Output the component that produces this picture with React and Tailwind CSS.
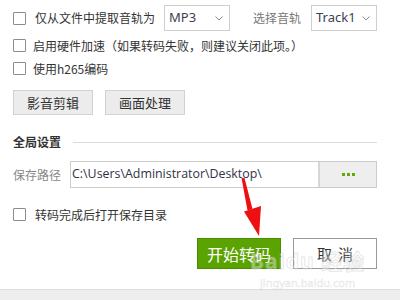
import { useState } from "react";

const FONT = { fontFamily: '"Noto Sans CJK SC", "Noto Sans", sans-serif' };

function Checkbox({ checked, onChange }) {
  return (
    <span
      onClick={onChange}
      className="w-[13px] h-[13px] shrink-0 border border-[#8c8c8c] rounded-[1px] bg-white flex items-center justify-center"
    >
      {checked && <span className="w-[7px] h-[7px] bg-[#5aa300]" />}
    </span>
  );
}

function Chevron() {
  return (
    <svg width="8" height="5" viewBox="0 0 8 5" className="shrink-0">
      <path d="M0.5 0.5 L4 4 L7.5 0.5" fill="none" stroke="#8a8a8a" strokeWidth="1" />
    </svg>
  );
}

function Select({ value }) {
  return (
    <div className="w-[66px] h-[26px] shrink-0 border border-[#cfcfcf] bg-white flex items-center justify-between pl-[4px] pr-[6px]">
      <span className="text-[13px] text-[#3d4150]" style={{ fontFamily: '"Noto Sans", sans-serif' }}>
        {value}
      </span>
      <Chevron />
    </div>
  );
}

export default function App() {
  const [checks, setChecks] = useState([false, false, false, false]);
  const toggle = (i) => setChecks((c) => c.map((v, j) => (j === i ? !v : v)));

  return (
    <div className="relative w-[400px] h-[300px] bg-white overflow-hidden text-[#333]" style={FONT}>
      <div className="flex flex-col pl-[13px] pr-[23px]">
        {/* 音轨 */}
        <div className="flex items-center h-[26px] mt-[5px]">
          <Checkbox checked={checks[0]} onChange={() => toggle(0)} />
          <span className="ml-[9px] w-[129px] shrink-0 text-[12px] leading-none whitespace-nowrap">仅从文件中提取音轨为</span>
          <Select value="MP3" />
          <span className="ml-[23px] w-[58px] shrink-0 text-[12px] leading-none text-[#777] whitespace-nowrap">选择音轨</span>
          <Select value="Track1" />
        </div>

        {/* 硬件加速 */}
        <div className="flex items-center h-[13px] mt-[8px]">
          <Checkbox checked={checks[1]} onChange={() => toggle(1)} />
          <span className="ml-[7px] text-[12px] leading-none whitespace-nowrap">
            启用硬件加速（如果转码失败，则建议关闭此项。）
          </span>
        </div>

        {/* h265 */}
        <div className="flex items-center h-[13px] mt-[10px]">
          <Checkbox checked={checks[2]} onChange={() => toggle(2)} />
          <span className="ml-[7px] text-[12px] leading-none whitespace-nowrap">使用h265编码</span>
        </div>

        {/* 剪辑 / 处理 */}
        <div className="flex gap-[12px] mt-[15px]">
          <button className="w-[80px] h-[25px] bg-[#ececec] border border-[#d2d2d2] text-[13px] text-[#333]">
            影音剪辑
          </button>
          <button className="w-[80px] h-[25px] bg-[#ececec] border border-[#d2d2d2] text-[13px] text-[#333]">
            画面处理
          </button>
        </div>

        {/* 全局设置 */}
        <div className="flex items-center mt-[19px] h-[16px]">
          <span className="text-[12px] font-bold text-[#333] leading-none whitespace-nowrap">全局设置</span>
          <span className="flex-1 ml-[12px] h-px bg-[#dcdcdc]" />
        </div>

        {/* 保存路径 */}
        <div className="flex items-center mt-[11px]">
          <span className="w-[57px] text-[12px] text-[#888] leading-none whitespace-nowrap">保存路径</span>
          <div className="flex-1 flex h-[27px] border border-[#cccccc]">
            <div
              className="flex-1 flex items-center pl-[1px] text-[12.4px] text-[#2f3346] whitespace-nowrap overflow-hidden"
              style={{ fontFamily: '"Open Sans", "Noto Sans", sans-serif' }}
            >
              C:\Users\Administrator\Desktop\
            </div>
            <button className="w-[58px] h-full bg-[#eeeeee] border-l-2 border-[#d6d6d6] flex items-center justify-center gap-[2px]">
              <span className="w-[3px] h-[3px] bg-[#63a806]" />
              <span className="w-[3px] h-[3px] bg-[#63a806]" />
              <span className="w-[3px] h-[3px] bg-[#63a806]" />
            </button>
          </div>
        </div>

        {/* 打开目录 */}
        <div className="flex items-center h-[13px] mt-[20px]">
          <Checkbox checked={checks[3]} onChange={() => toggle(3)} />
          <span className="ml-[9px] text-[12px] leading-none whitespace-nowrap">转码完成后打开保存目录</span>
        </div>

        {/* 底部按钮 */}
        <div className="flex justify-end gap-[12px] mt-[17px]">
          <button className="w-[84px] h-[31px] bg-[#5aa300] border border-[#4b8b00] text-white text-[16px] leading-none">
            开始转码
          </button>
          <button className="w-[84px] h-[31px] bg-white border border-[#9a9a9a] text-[#333] text-[15px] leading-none tracking-[6px] pl-[6px]">
            取消
          </button>
        </div>
      </div>

      {/* 底栏 */}
      <div className="absolute left-0 right-0 bottom-0 h-[11px] bg-[#eeeeee] border-t border-[#dddddd]" />

      {/* 水印 */}
      <div className="absolute left-[250px] top-[251px] flex flex-col items-center pointer-events-none select-none">
        <span
          className="text-[21px] font-bold leading-none text-white/40 tracking-[1px]"
          style={{ fontFamily: '"Noto Sans", "Noto Sans CJK SC", sans-serif', WebkitTextStroke: "1px rgba(170,170,170,0.3)" }}
        >
          Baidu 经验
        </span>
        <span
          className="text-[11px] leading-none mt-[5px] text-white/40"
          style={{ fontFamily: '"Noto Sans", sans-serif', WebkitTextStroke: "0.6px rgba(170,170,170,0.3)" }}
        >
          jingyan.baidu.com
        </span>
      </div>

      {/* 红色箭头 */}
      <svg className="absolute left-0 top-0 pointer-events-none" width="400" height="300" viewBox="0 0 400 300">
        <polygon points="241.5,178 244.5,178 252.5,209 247.5,210.5" fill="#ee1010" />
        <polygon points="244,211.5 261,206 259,236" fill="#ee1010" />
      </svg>
    </div>
  );
}
